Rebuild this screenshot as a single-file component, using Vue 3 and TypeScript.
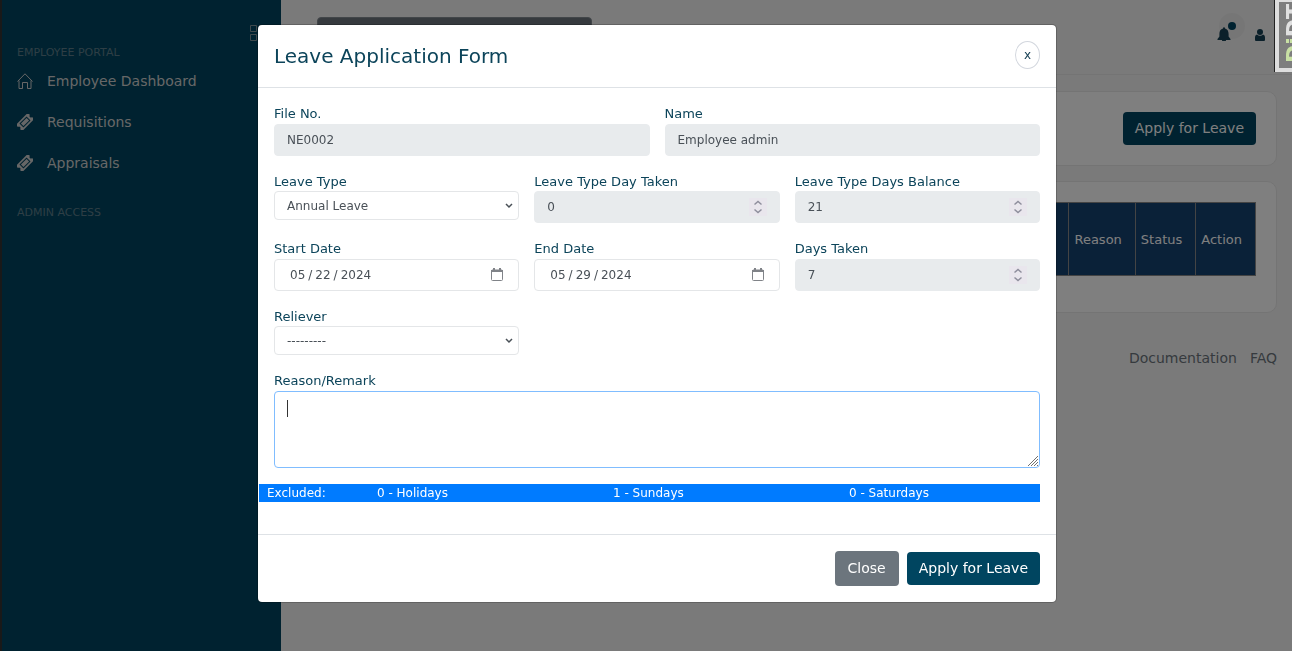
<script setup lang="ts">
import { onMounted, ref } from 'vue'

interface NumberField {
  id: string
  label: string
  value: number
}

const leaveType = ref('Annual Leave')
const startDate = ref('2024-05-22')
const endDate = ref('2024-05-29')
const reliever = ref('---------')
const reason = ref('')
const reasonBox = ref<HTMLTextAreaElement | null>(null)

const balances: NumberField[] = [
  { id: 'day-taken', label: 'Leave Type Day Taken', value: 0 },
  { id: 'day-balance', label: 'Leave Type Days Balance', value: 21 },
]
const daysTaken = ref(7)
const columns: string[] = ['Reason', 'Status', 'Action']
const excluded: string[] = ['0 - Holidays', '1 - Sundays', '0 - Saturdays']
const requests: string[] = ['Requisitions', 'Appraisals']

onMounted(() => reasonBox.value?.focus())
</script>

<template>
  <div class="app">
    <aside class="sidebar">
      <svg class="toggle" viewBox="0 0 16 16" fill="none" stroke="#7e939b">
        <path d="M.5.5h6v6h-6zM9.5.5h6v6h-6zM.5 9.5h6v6h-6zM9.5 9.5h6v6h-6z" />
      </svg>
      <h2>EMPLOYEE PORTAL</h2>
      <nav>
        <a href="#">
          <svg viewBox="0 0 16 16" fill="none" stroke="currentColor">
            <path d="M.5 8.5 8 .8l7.5 7.700M2 7.500v8h3.500v-6h5v6H14v-8" />
          </svg>
          Employee Dashboard
        </a>
        <a v-for="item in requests" :key="item" href="#">
          <svg viewBox="0 0 16 16">
            <g transform="rotate(-45 8 8)">
              <path fill="currentColor" fill-rule="evenodd" d="M-.5 3.500h17v3a1.500 1.500 0 0 0 0 3v3h-17v-3a1.500 1.500 0 0 0 0-3zM3 5.200v5.600h10V5.200zM4 6.200h8v3.600H4z" />
            </g>
          </svg>
          {{ item }}
        </a>
      </nav>
      <h2>ADMIN ACCESS</h2>
    </aside>

    <div class="content">
      <header class="topbar">
        <span class="search"></span>
        <button class="bell" type="button" aria-label="Notifications">
          <svg viewBox="0 0 28 28">
            <circle cx="15" cy="13" r="13" fill="#000" fill-opacity=".03" />
            <path fill="#174155" d="M6 15.500c-2.400.6-3.600 2.500-3.600 5.500v2.500L.5 26v1h13v-1l-1.900-2.500V21c0-3-1.200-4.900-3.600-5.500v-1H6zM5 27h4a2 2 0 0 1-4 0z" />
            <circle cx="15" cy="13" r="4" fill="#004560" />
          </svg>
        </button>
        <button class="user" type="button" aria-label="Account">
          <svg viewBox="0 0 10 12" fill="#174155">
            <circle cx="5" cy="3" r="3" />
            <path d="M2 5.500a4 4 0 0 0 6 0c1.400.3 2 1.500 2 3V11a1 1 0 0 1-1 1H1a1 1 0 0 1-1-1V8.500c0-1.500.6-2.700 2-3z" />
          </svg>
        </button>
      </header>
      <main>
        <section class="card head-card">
          <button class="btn primary" type="button">Apply for Leave</button>
        </section>
        <section class="card table-card">
          <table>
            <thead>
              <tr>
                <th class="filler"></th>
                <th v-for="c in columns" :key="c">{{ c }}</th>
              </tr>
            </thead>
          </table>
        </section>
        <footer class="links">
          <a href="#">Documentation</a>
          <a href="#">FAQ</a>
        </footer>
      </main>
    </div>

    <div class="backdrop">
      <form class="modal" role="dialog" aria-labelledby="modal-title" @submit.prevent>
        <header class="modal-head">
          <h1 id="modal-title">Leave Application Form</h1>
          <button class="dismiss" type="button" aria-label="Dismiss">x</button>
        </header>

        <div class="modal-body">
          <div class="row two">
            <div class="field">
              <label for="file-no">File No.</label>
              <input id="file-no" type="text" value="NE0002" readonly />
            </div>
            <div class="field">
              <label for="name">Name</label>
              <input id="name" type="text" value="Employee admin" readonly />
            </div>
          </div>

          <div class="row three">
            <div class="field tight">
              <label for="leave-type">Leave Type</label>
              <select id="leave-type" v-model="leaveType">
                <option>Annual Leave</option>
              </select>
            </div>
            <div v-for="n in balances" :key="n.id" class="field tight">
              <label :for="n.id">{{ n.label }}</label>
              <div class="number">
                <input :id="n.id" type="number" :value="n.value" readonly />
                <svg viewBox="0 0 18 18"><path d="M5.500 6.500 9 3.500l3.500 3M5.500 11.500 9 14.500l3.500-3" /></svg>
              </div>
            </div>
          </div>

          <div class="row three">
            <div class="field">
              <label for="start">Start Date</label>
              <input id="start" v-model="startDate" type="date" />
            </div>
            <div class="field">
              <label for="end">End Date</label>
              <input id="end" v-model="endDate" type="date" />
            </div>
            <div class="field">
              <label for="days-taken">Days Taken</label>
              <div class="number">
                <input id="days-taken" type="number" :value="daysTaken" readonly />
                <svg viewBox="0 0 18 18"><path d="M5.500 6.500 9 3.500l3.500 3M5.500 11.500 9 14.500l3.500-3" /></svg>
              </div>
            </div>
          </div>

          <div class="row three">
            <div class="field tight">
              <label for="reliever">Reliever</label>
              <select id="reliever" v-model="reliever">
                <option>---------</option>
              </select>
            </div>
          </div>

          <div class="field">
            <label for="reason">Reason/Remark</label>
            <div class="reason">
              <textarea id="reason" ref="reasonBox" v-model="reason"></textarea>
              <span v-if="!reason" class="cursor"></span>
            </div>
          </div>

          <div class="excluded">
            <span>Excluded:</span>
            <span v-for="e in excluded" :key="e">{{ e }}</span>
          </div>
        </div>

        <footer class="modal-foot">
          <button class="btn secondary" type="button">Close</button>
          <button class="btn primary" type="submit">Apply for Leave</button>
        </footer>
      </form>
    </div>

    <div class="debug"><span>Dj</span>DT</div>
  </div>
</template>

<style>
body {
  margin: 0;
  background: #f4f4f4;
}
</style>

<style scoped>
* {
  box-sizing: border-box;
}
.app {
  display: flex;
  min-height: 100vh;
  font: 13px/20px "DejaVu Sans", sans-serif;
  color: #0c445a;
}
button,
input,
select,
textarea {
  font: inherit;
}
a {
  text-decoration: none;
}
.sidebar {
  position: relative;
  flex: 0 0 281px;
  padding: 43px 16px 0 15px;
  background: #004560;
  border-left: 2px solid #333;
}
.sidebar h2 {
  margin: 0;
  font-size: 11px;
  font-weight: 400;
  line-height: 20px;
  color: #5d7d8b;
}
.toggle {
  position: absolute;
  top: 25px;
  right: 15px;
  width: 16px;
  height: 16px;
}
nav {
  margin-bottom: 20px;
}
nav a {
  display: flex;
  align-items: center;
  gap: 14px;
  height: 41px;
  font-size: 14px;
  color: #cfcfcf;
}
nav a:first-child {
  height: 36px;
  margin-bottom: 2px;
}
nav svg {
  width: 16px;
  height: 16px;
}
.content {
  flex: 1;
  min-width: 0;
}
.topbar {
  display: flex;
  align-items: flex-start;
  height: 75px;
  padding: 13px 27px 0 36px;
  border-bottom: 1px solid #e9e9e9;
}
.search {
  width: 275px;
  height: 36px;
  margin: 4px auto 0 0;
  background: #6c757d;
  border: 1px solid #848c93;
  border-radius: 4px;
}
.bell,
.user {
  padding: 0;
  border: 0;
  background: none;
}
.bell svg {
  display: block;
  width: 28px;
  height: 28px;
}
.user {
  margin: 16px 0 0 10px;
}
.user svg {
  display: block;
  width: 10px;
  height: 12px;
}
main {
  padding: 16px 15px;
}
.card {
  background: #fff;
  border: 1px solid #e9e9e9;
  border-radius: 10px;
}
.head-card {
  display: flex;
  justify-content: flex-end;
  padding: 20px;
  margin-bottom: 15px;
  height: 75px;
}
.table-card {
  height: 132px;
  padding: 20px;
}
.btn {
  padding: 0 12px 2px;
  height: 33px;
  border: 0;
  border-radius: 4px;
  font-size: 14px;
  color: #fff;
}
.primary {
  background: #004560;
}
.secondary {
  height: 35px;
  padding: 0 13px 2px;
  background: #6c757d;
}
table {
  width: 100%;
  border-collapse: collapse;
}
th {
  height: 73px;
  padding: 2px 13px 0 5px;
  border: 1px solid #888;
  background: #144270;
  font-size: 13px;
  font-weight: 400;
  color: #fff;
  text-align: left;
}
.filler {
  width: 90%;
}
.links {
  display: flex;
  justify-content: flex-end;
  gap: 13px;
  margin-top: 35px;
  font-size: 14px;
}
.links a {
  color: #6c757d;
}
.debug {
  position: fixed;
  top: 0;
  right: 0;
  width: 17px;
  height: 72px;
  padding: 0 0 5px 4px;
  overflow: hidden;
  border: solid #dedede;
  border-width: 2px 0 4px 4px;
  box-shadow: -1px 0 #222;
  background: #7e7e7e;
  font: 700 22px/24px "DejaVu Sans", sans-serif;
  color: #e0e0e0;
  writing-mode: sideways-lr;
}
.debug span {
  color: #c8e0a4;
}
.backdrop {
  position: fixed;
  inset: 0;
  padding: 24px 16px 16px 38px;
  overflow: auto;
  background: rgba(0, 0, 0, 0.5);
}
.modal {
  max-width: 800px;
  margin: 0 auto;
  border: 1px solid rgba(0, 0, 0, 0.2);
  border-radius: 5px;
  background: #fff;
  background-clip: padding-box;
}
.modal-head {
  display: flex;
  align-items: flex-start;
  justify-content: space-between;
  height: 63px;
  padding: 16px;
  border-bottom: 1px solid #dee2e6;
}
h1 {
  margin: 0;
  font-size: 20px;
  font-weight: 400;
  line-height: 30px;
}
.dismiss {
  width: 25px;
  height: 28px;
  padding: 0;
  border: 1px solid #d3d7de;
  border-radius: 50%;
  background: #fff;
  font-size: 12px;
  color: #174155;
}
.modal-body {
  padding: 16px;
  height: 446px;
}
.row {
  display: grid;
  column-gap: 15px;
  margin-bottom: 16px;
}
.two {
  grid-template-columns: repeat(2, minmax(0, 1fr));
}
.three {
  grid-template-columns: repeat(3, minmax(0, 1fr));
}
label {
  display: block;
  height: 20px;
}
.tight label {
  height: 19px;
}
input,
select,
textarea {
  display: block;
  width: 100%;
  height: 32px;
  padding: 0 12px;
  border: 1px solid #e4e6e8;
  border-radius: 4px;
  background: #fff;
  font-size: 12px;
  line-height: 18px;
  color: #495057;
  outline: 0;
}
input[readonly] {
  border-color: #e8ebed;
  background: #e8ebed;
}
select {
  height: 29px;
  appearance: none;
  background: #fff url("data:image/svg+xml,%3Csvg xmlns='http://www.w3.org/2000/svg' width='8' height='6'%3E%3Cpath d='M1 1l3 3 3-3' fill='none' stroke='%23495057' stroke-width='1.5'/%3E%3C/svg%3E") no-repeat right 5px center;
}
input[type="date"] {
  padding: 0 14px;
}
input[type="date"]::-webkit-datetime-edit-text {
  padding: 0 2px;
}
input[type="date"]::-webkit-calendar-picker-indicator {
  width: 14px;
  height: 14px;
  padding: 0;
  background: url("data:image/svg+xml,%3Csvg xmlns='http://www.w3.org/2000/svg' width='14' height='14'%3E%3Cpath d='M2.500 2h9a1 1 0 0 1 1 1v8.500a1 1 0 0 1-1 1h-9a1 1 0 0 1-1-1V3a1 1 0 0 1 1-1z' fill='none' stroke='%23808388'/%3E%3Cpath d='M1 2h12v2H1zM3 0h2v2H3zM9 0h2v2H9z' fill='%23808388'/%3E%3C/svg%3E") no-repeat center;
}
.number {
  position: relative;
}
.number input {
  appearance: textfield;
}
.number svg {
  position: absolute;
  top: 7px;
  right: 13px;
  width: 18px;
  height: 18px;
  background: #e9e6ed;
  fill: none;
  stroke: #8f8f9d;
  stroke-width: 1.5;
}
.reason {
  position: relative;
}
textarea {
  height: 77px;
  padding: 8px 12px;
  border-color: #80bdff;
  resize: vertical;
  caret-color: transparent;
}
textarea::-webkit-resizer {
  background: url("data:image/svg+xml,%3Csvg xmlns='http://www.w3.org/2000/svg' width='12' height='12'%3E%3Cpath d='M1 11 11 1M4 11l7-7M7 11l4-4M10 11l1-1' stroke='%23707070'/%3E%3C/svg%3E") no-repeat right bottom;
}
.cursor {
  position: absolute;
  top: 9px;
  left: 13px;
  width: 1px;
  height: 17px;
  background: #333;
}
.excluded {
  display: grid;
  grid-template-columns: 110fr 236fr 236fr 191fr;
  margin: 16px 0 0 -15px;
  padding-left: 8px;
  background: #007bff;
  font-size: 12px;
  line-height: 18px;
  color: #fff;
}
.modal-foot {
  display: flex;
  align-items: center;
  justify-content: flex-end;
  gap: 8px;
  height: 68px;
  padding: 0 16px;
  border-top: 1px solid #dee2e6;
}
</style>
